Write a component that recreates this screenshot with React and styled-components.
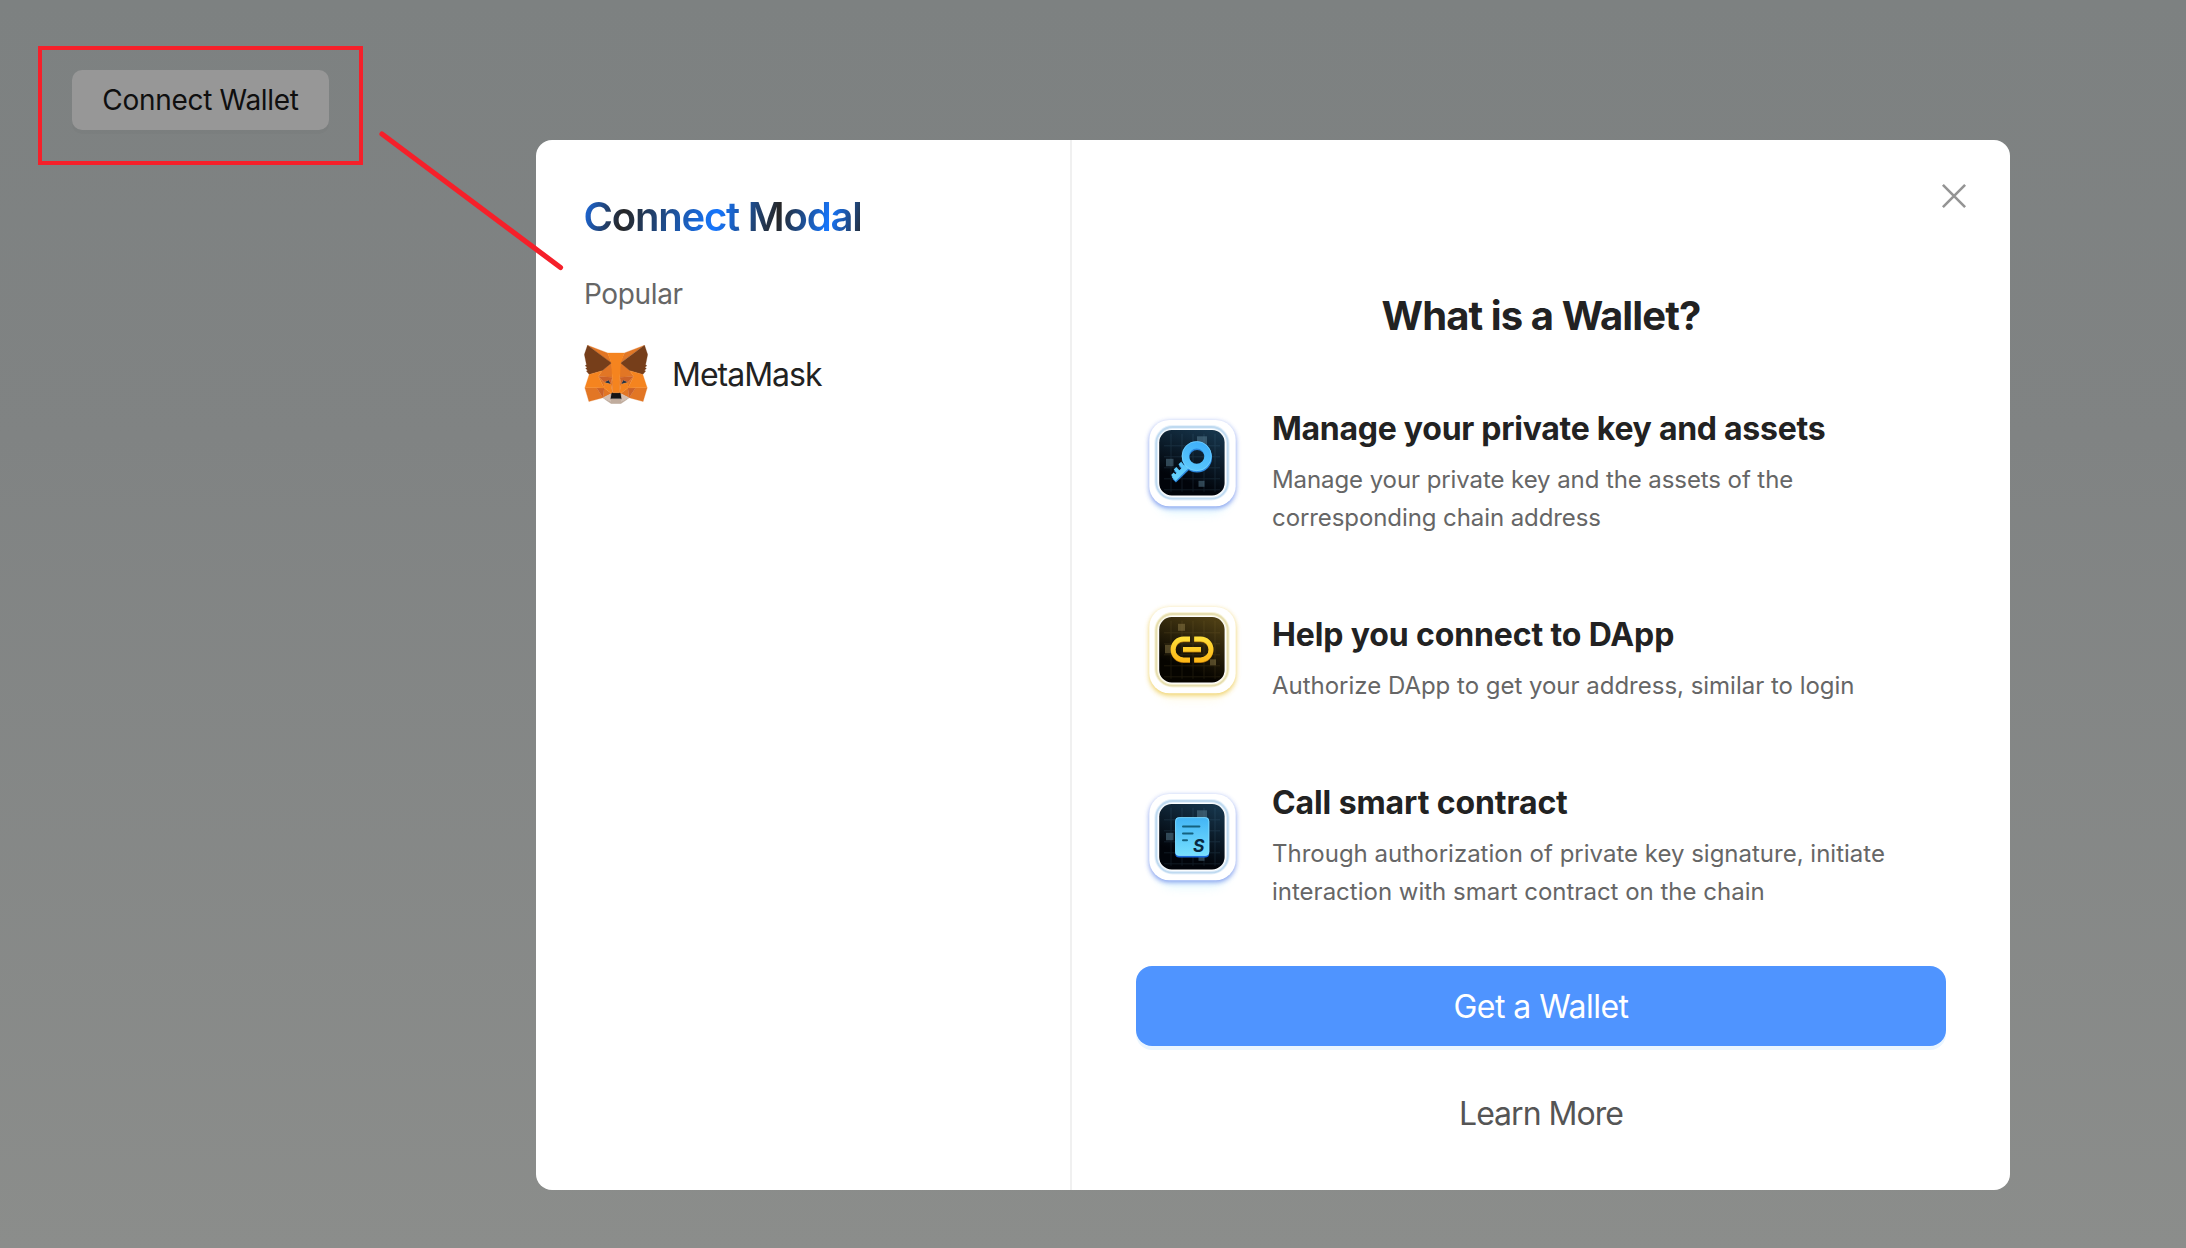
import React from 'react';
import styled, { createGlobalStyle } from 'styled-components';

const GlobalStyle = createGlobalStyle`
  * { box-sizing: border-box; }
  body {
    margin: 0;
    font-family: Inter, "Liberation Sans", sans-serif;
    color: #222;
    -webkit-font-smoothing: antialiased;
  }
  h2, h3, p { margin: 0; }
  button { font-family: inherit; cursor: pointer; }
`;

const Page = styled.main`
  position: relative;
  min-height: 1248px;
  height: 100vh;
  overflow: hidden;
  padding: 70px 72px;
  background: linear-gradient(180deg, #7d8181 0%, #808383 35%, #8b8d8b 100%);
`;

const ConnectButton = styled.button`
  display: block;
  width: 257px;
  height: 60px;
  padding: 0;
  border: 0;
  border-radius: 10px;
  background: #979797;
  box-shadow: 0 4px 0 rgba(0, 0, 0, 0.02);
  color: #0f0f0f;
  font-size: 28px;
  line-height: 44px;
  letter-spacing: -0.3px;
`;

const Highlight = styled.div`
  position: absolute;
  left: 38px;
  top: 46px;
  width: 325px;
  height: 119px;
  border: 4px solid #f5202a;
`;

const Pointer = styled.svg`
  position: absolute;
  left: 372px;
  top: 124px;
  width: 200px;
  height: 154px;
`;

const Overlay = styled.div`
  position: absolute;
  inset: 0;
  padding: 140px 176px 58px 536px;
`;

const Modal = styled.section`
  display: grid;
  grid-template-columns: 536px 1fr;
  height: 1050px;
  border-radius: 16px;
  background: #fff;
`;

const WalletPanel = styled.div`
  padding: 45px 48px;
  border-right: 2px solid #f0f0f0;
`;

const ModalTitle = styled.h2`
  width: fit-content;
  margin-left: -0.5px;
  font-size: 40px;
  font-weight: 600;
  line-height: 64px;
  letter-spacing: -1.2px;
  color: transparent;
  background-image: linear-gradient(
    102deg,
    #1a70f0 0%,
    #262626 15.5%,
    #1677ff 48%,
    #262626 69%,
    #1677ff 87%,
    #262626 100%
  );
  background-clip: text;
  -webkit-background-clip: text;
`;

const GroupLabel = styled.p`
  margin-top: 23px;
  font-size: 28px;
  line-height: 44px;
  letter-spacing: -0.371px;
  color: #666;
`;

const WalletRow = styled.div`
  display: flex;
  align-items: center;
  gap: 24px;
  height: 64px;
  margin-top: 26px;
  font-size: 32px;
  letter-spacing: -1px;
`;

const FoxIcon = styled.svg`
  width: 64px;
  height: 59px;
`;

const GuidePanel = styled.div`
  position: relative;
  display: flex;
  flex-direction: column;
  align-items: stretch;
  padding: 152px 64px 0;
`;

const CloseButton = styled.button`
  position: absolute;
  top: 40px;
  right: 40px;
  display: grid;
  place-items: center;
  width: 32px;
  height: 32px;
  padding: 0;
  border: 0;
  background: none;
`;

const GuideTitle = styled.h2`
  font-size: 40px;
  font-weight: 700;
  line-height: 48px;
  letter-spacing: -0.9px;
  text-align: center;
`;

const GuideList = styled.div`
  display: flex;
  flex-direction: column;
  gap: 74px;
  margin-top: 65px;
`;

const GuideItem = styled.div`
  display: flex;
  align-items: center;
  gap: 24px;
`;

const Badge = styled.svg`
  flex: none;
  width: 112px;
  height: 112px;
  margin: -10px 0;
`;

const ItemTitle = styled.h3`
  font-size: 32px;
  font-weight: 700;
  line-height: 48px;
  letter-spacing: ${(p) => p.$tracking}px;
  white-space: nowrap;
`;

const ItemText = styled.p`
  margin-top: 8px;
  font-size: 24px;
  line-height: 38px;
  letter-spacing: ${(p) => p.$tracking}px;
  color: #666;
  white-space: pre-line;
`;

const PrimaryButton = styled.button`
  height: 80px;
  margin-top: 55px;
  padding: 0;
  border: 0;
  border-radius: 16px;
  background: #4f94ff;
  box-shadow: 0 4px 0 #ebf6ff;
  color: #fff;
  font-size: 32px;
  letter-spacing: -0.545px;
`;

const TextButton = styled.button`
  align-self: center;
  height: 48px;
  margin-top: 44px;
  padding: 0;
  border: 0;
  background: none;
  color: #555;
  font-size: 32px;
  line-height: 48px;
  letter-spacing: -0.98px;
`;

const foxShapes = [
  ['#E17726', 'M32.9582 1L19.8241 10.7183L22.2665 5.09082L32.9582 1Z'],
  ['#E27625', 'M2.66296 1L15.6803 10.809L13.3546 5.09082L2.66296 1Z'],
  ['#E27625', 'M28.2295 23.5334L24.7348 28.872L32.2175 30.9315L34.3611 23.6501L28.2295 23.5334Z'],
  ['#E27625', 'M1.27281 23.6501L3.40351 30.9315L10.8732 28.872L7.3914 23.5334L1.27281 23.6501Z'],
  ['#E27625', 'M10.4706 14.5149L8.39209 17.6507L15.7988 17.9876L15.5529 9.99683L10.4706 14.5149Z'],
  ['#E27625', 'M25.1505 14.5149L19.9903 9.90613L19.8242 17.9876L27.2309 17.6507L25.1505 14.5149Z'],
  ['#E27625', 'M10.8733 28.8721L15.3566 26.706L11.5 23.7018L10.8733 28.8721Z'],
  ['#E27625', 'M20.2659 26.706L24.7348 28.8721L24.1225 23.7018L20.2659 26.706Z'],
  ['#D5BFB2', 'M24.7348 28.8721L20.2659 26.7061L20.6299 29.6083L20.5908 30.8395L24.7348 28.8721Z'],
  ['#D5BFB2', 'M10.8732 28.8721L15.0316 30.8395L15.0056 29.6083L15.3565 26.7061L10.8732 28.8721Z'],
  ['#233447', 'M15.1083 21.784L11.3953 20.6958L14.0177 19.4906L15.1083 21.784Z'],
  ['#233447', 'M20.5142 21.784L21.6048 19.4906L24.2402 20.6958L20.5142 21.784Z'],
  ['#CC6228', 'M10.8733 28.872L11.5257 23.5334L7.39136 23.6501L10.8733 28.872Z'],
  ['#CC6228', 'M24.0965 23.5334L24.7349 28.872L28.2295 23.6501L24.0965 23.5334Z'],
  ['#CC6228', 'M27.2308 17.6508L19.8241 17.9877L20.5142 21.7841L21.6048 19.4908L24.2402 20.696L27.2308 17.6508Z'],
  ['#CC6228', 'M11.3953 20.696L14.0177 19.4908L15.1083 21.7841L15.7987 17.9877L8.39209 17.6508L11.3953 20.696Z'],
  ['#E27525', 'M8.39209 17.6508L11.5 23.7019L11.3953 20.696L8.39209 17.6508Z'],
  ['#E27525', 'M24.2402 20.696L24.1225 23.7019L27.2308 17.6508L24.2402 20.696Z'],
  ['#E27525', 'M15.7988 17.9877L15.1084 21.7842L15.9778 26.2655L16.1728 20.3591L15.7988 17.9877Z'],
  ['#E27525', 'M19.8241 17.9877L19.463 20.3462L19.6449 26.2655L20.5142 21.7842L19.8241 17.9877Z'],
  ['#F5841F', 'M20.5142 21.7842L19.6449 26.2656L20.2659 26.7061L24.1225 23.7019L24.2402 20.696L20.5142 21.7842Z'],
  ['#F5841F', 'M11.3953 20.696L11.5 23.7019L15.3566 26.7061L15.9777 26.2656L15.1083 21.7842L11.3953 20.696Z'],
  ['#C0AC9D', 'M20.5908 30.8395L20.6299 29.6084L20.2919 29.3233H15.3304L15.0056 29.6084L15.0316 30.8395L10.8732 28.8721L12.3288 30.0637L15.2785 32.0971H20.331L23.2935 30.0637L24.7348 28.8721L20.5908 30.8395Z'],
  ['#161616', 'M20.2658 26.7061L19.6448 26.2656H15.9778L15.3566 26.7061L15.0057 29.6084L15.3305 29.3233H20.2919L20.6298 29.6084L20.2658 26.7061Z'],
  ['#763E1A', 'M33.5169 11.3532L34.6208 5.96777L32.9582 1L20.2659 10.3943L25.1505 14.5149L32.0492 16.5225L33.5689 14.7461L32.9062 14.2667L33.9614 13.3081L33.1538 12.6732L34.2091 11.8698L33.5169 11.3532Z'],
  ['#763E1A', 'M1 5.96777L2.11687 11.3532L1.40187 11.8698L2.47018 12.6732L1.66259 13.3081L2.71774 14.2667L2.05499 14.7461L3.56167 16.5225L10.4706 14.5149L15.3566 10.3943L2.66296 1L1 5.96777Z'],
  ['#F5841F', 'M32.0492 16.5225L25.1505 14.5149L27.2308 17.6508L24.1225 23.7019L28.2295 23.65H34.3611L32.0492 16.5225Z'],
  ['#F5841F', 'M10.4706 14.5149L3.56168 16.5225L1.27281 23.65H7.39141L11.5 23.7019L8.39213 17.6508L10.4706 14.5149Z'],
  ['#F5841F', 'M19.8241 17.9877L20.2659 10.3943L22.2665 5.09082H13.3546L15.3566 10.3943L15.7988 17.9877L16.1599 20.3721L16.1729 26.2656H19.6448L19.6578 20.3721L19.8241 17.9877Z'],
];

function Fox() {
  return (
    <FoxIcon viewBox="0.8 0.9 34 31.3">
      {foxShapes.map(([fill, d]) => (
        <path key={d} d={d} fill={fill} stroke={fill} strokeWidth="0.15" strokeLinejoin="round" />
      ))}
    </FoxIcon>
  );
}

const palettes = {
  blue: {
    glow: '#5f7fe8', glowOpacity: 0.75, haze: '#8fe9ff', ring: '#bfdaf0', ringSoft: '#e6f1fb',
    from: '#16344a', to: '#01040a', grid: '#6fa8c8', square: '#5b8296',
    squares: [[48, 16.5, 10], [17, 39, 7.5], [49.5, 61, 6]],
  },
  gold: {
    glow: '#ecc94f', glowOpacity: 0.85, haze: '#fff0a8', ring: '#e6deb0', ringSoft: '#f8f4da',
    from: '#4d3e14', to: '#060400', grid: '#a8904c', square: '#8e7b48',
    squares: [[29, 17, 7], [16, 38, 8.5], [61, 52.5, 6]],
  },
};

function BadgeIcon({ id, tone, children }) {
  const p = palettes[tone];
  return (
    <Badge viewBox="-13 -4.8 112 112">
      <defs>
        <linearGradient id={`${id}-tile`} x1="0.75" y1="0" x2="0.35" y2="1">
          <stop offset="0" stopColor={p.from} />
          <stop offset="0.8" stopColor={p.to} />
        </linearGradient>
        <filter id={`${id}-blur`} x="-30%" y="-30%" width="160%" height="160%">
          <feGaussianBlur stdDeviation="2.6" />
        </filter>
        <filter id={`${id}-haze`} x="-30%" y="-30%" width="160%" height="160%">
          <feGaussianBlur stdDeviation="5" />
        </filter>
      </defs>
      <rect x="6" y="14" width="75" height="80" rx="20" fill={p.haze} opacity="0.22" filter={`url(#${id}-haze)`} />
      <rect x="0.2" y="1.8" width="86.6" height="86.7" rx="20" fill={p.glow} opacity={p.glowOpacity} filter={`url(#${id}-blur)`} />
      <rect x="0.3" y="0.2" width="86.4" height="86.2" rx="20" fill="#fff" />
      <rect x="7.2" y="7.2" width="71.6" height="71.6" rx="16.5" fill="#fff" stroke={p.ringSoft} strokeWidth="3.8" />
      <rect x="7.2" y="7.2" width="71.6" height="71.6" rx="16.5" fill="none" stroke={p.ring} strokeWidth="1.8" />
      <rect x="10.2" y="10.2" width="65.4" height="65.4" rx="12.5" fill={`url(#${id}-tile)`} />
      <path
        d="M15 26H71M15 37H71M15 48H71M15 59H71M15 70H71M22 14V72M33 14V72M44 14V72M55 14V72M66 14V72"
        stroke={p.grid} strokeWidth="1" opacity="0.13"
      />
      {p.squares.map(([x, y, s]) => (
        <rect key={x} x={x} y={y} width={s} height={s} fill={p.square} opacity="0.5" />
      ))}
      {children}
    </Badge>
  );
}

function KeyShape({ color }) {
  return (
    <g fill="none" stroke={color}>
      <circle cx="47.7" cy="36.3" r="11.3" strokeWidth="7.2" />
      <path d="M39.3 45.2L24.8 59.3" strokeWidth="5" />
      <path d="M34.4 47.4L30.8 43.2M29.8 52.4L26 48.4M26.2 57L23.4 54" strokeWidth="3.6" />
    </g>
  );
}

function KeyBadge() {
  return (
    <BadgeIcon id="key" tone="blue">
      <linearGradient id="key-fill" gradientUnits="userSpaceOnUse" x1="50" y1="22" x2="34" y2="60">
        <stop offset="0" stopColor="#3fb0fa" />
        <stop offset="1" stopColor="#66d2fc" />
      </linearGradient>
      <g transform="translate(0.4 1.6)"><KeyShape color="#2a86dc" /></g>
      <KeyShape color="url(#key-fill)" />
      <circle cx="47.7" cy="36.3" r="14.6" fill="none" stroke="#7fd8ff" strokeWidth="0.6" />
    </BadgeIcon>
  );
}

function LinkBadge() {
  const link = 'M41 32.2H34.5A10.4 10.4 0 0 0 34.5 53H41M45.2 32.2H51.6A10.4 10.4 0 0 1 51.6 53H45.2M34 42.6H52';
  return (
    <BadgeIcon id="link" tone="gold">
      <linearGradient id="link-fill" gradientUnits="userSpaceOnUse" x1="0" y1="29" x2="0" y2="56">
        <stop offset="0" stopColor="#ffe23c" />
        <stop offset="1" stopColor="#fdb515" />
      </linearGradient>
      <path d={link} fill="none" stroke="#a36a08" strokeWidth="5" transform="translate(0 0.7)" />
      <path d={link} fill="none" stroke="url(#link-fill)" strokeWidth="4.8" />
    </BadgeIcon>
  );
}

const ContractMark = styled.text`
  font-family: Inter, sans-serif;
  font-size: 17.5px;
  font-weight: 700;
  font-style: italic;
`;

function ContractBadge() {
  return (
    <BadgeIcon id="contract" tone="blue">
      <linearGradient id="contract-fill" x1="0" y1="0" x2="0" y2="1">
        <stop offset="0" stopColor="#42b4f5" />
        <stop offset="1" stopColor="#76e0ff" />
      </linearGradient>
      <rect x="26.2" y="25" width="34" height="38.6" rx="4" fill="#1668dc" />
      <rect x="26.2" y="23.4" width="34" height="38.6" rx="4" fill="url(#contract-fill)" />
      <rect x="26.6" y="23.8" width="33.2" height="37.8" rx="3.6" fill="none" stroke="#8be2ff" strokeWidth="0.7" />
      <path d="M34 32.7H50.4M34 39.6H43.6M34 46.4H38" stroke="#14617f" strokeWidth="2" strokeLinecap="round" />
      <ContractMark x="44" y="58.4" fill="#082740">S</ContractMark>
    </BadgeIcon>
  );
}

const guides = [
  {
    Icon: KeyBadge,
    title: 'Manage your private key and assets',
    titleTracking: -0.27,
    text: 'Manage your private key and the assets of the\ncorresponding chain address',
    tracking: -0.085,
  },
  {
    Icon: LinkBadge,
    title: 'Help you connect to DApp',
    titleTracking: -0.13,
    text: 'Authorize DApp to get your address, similar to login',
    tracking: -0.015,
  },
  {
    Icon: ContractBadge,
    title: 'Call smart contract',
    titleTracking: -0.1,
    text: 'Through authorization of private key signature, initiate\ninteraction with smart contract on the chain',
    tracking: 0,
  },
];

export default function App() {
  return (
    <>
      <GlobalStyle />
      <Page>
        <ConnectButton>Connect Wallet</ConnectButton>
        <Overlay>
          <Modal>
            <WalletPanel>
              <ModalTitle>Connect Modal</ModalTitle>
              <GroupLabel>Popular</GroupLabel>
              <WalletRow>
                <Fox />
                <span>MetaMask</span>
              </WalletRow>
            </WalletPanel>
            <GuidePanel>
              <CloseButton aria-label="Close">
                <svg width="32" height="32" viewBox="0 0 32 32">
                  <path d="M4.9 4.9L27.1 27.1M27.1 4.9L4.9 27.1" stroke="#949494" strokeWidth="2.6" />
                </svg>
              </CloseButton>
              <GuideTitle>What is a Wallet?</GuideTitle>
              <GuideList>
                {guides.map(({ Icon, title, titleTracking, text, tracking }) => (
                  <GuideItem key={title}>
                    <Icon />
                    <div>
                      <ItemTitle $tracking={titleTracking}>{title}</ItemTitle>
                      <ItemText $tracking={tracking}>{text}</ItemText>
                    </div>
                  </GuideItem>
                ))}
              </GuideList>
              <PrimaryButton>Get a Wallet</PrimaryButton>
              <TextButton>Learn More</TextButton>
            </GuidePanel>
          </Modal>
        </Overlay>
        <Highlight />
        <Pointer viewBox="0 0 200 154">
          <path d="M10 10L188.5 143.5" stroke="#f5202a" strokeWidth="5.2" strokeLinecap="round" />
        </Pointer>
      </Page>
    </>
  );
}
